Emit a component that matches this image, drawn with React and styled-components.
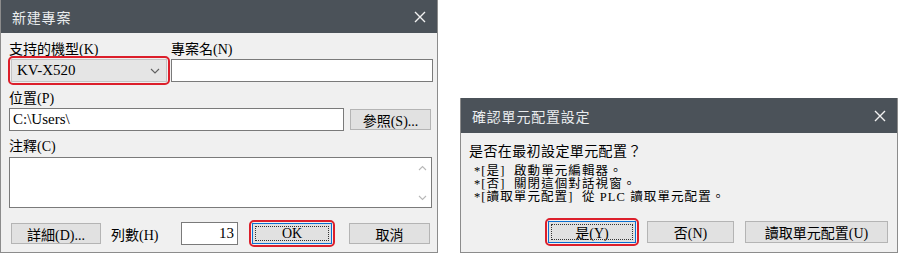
import styled, { createGlobalStyle } from "styled-components";

const GlobalStyle = createGlobalStyle`
  html, body {
    margin: 0;
    padding: 0;
    background: #ffffff;
  }
  body {
    font-family: "Liberation Serif", "Noto Sans CJK TC", serif;
    color: #000;
  }
`;

const Page = styled.div`
  width: 900px;
  height: 254px;
  display: flex;
  align-items: flex-end;
  gap: 22px;
  box-sizing: border-box;
  padding-bottom: 1px;
`;

const Dialog = styled.div`
  width: ${(p) => p.$width}px;
  height: ${(p) => p.$height}px;
  box-sizing: border-box;
  border: 1px solid #8c8c8c;
  border-top: none;
  background: #f0f0f0;
  display: flex;
  flex-direction: column;
`;

const TitleBar = styled.div`
  height: ${(p) => p.$height}px;
  flex: none;
  background: #4b5259;
  color: #e9ecee;
  display: flex;
  align-items: center;
  justify-content: space-between;
  padding: 0 11px 0 11px;
  font-family: "Noto Sans CJK TC", sans-serif;
  font-size: 14px;
  letter-spacing: 0.8px;
`;

const Body = styled.div`
  flex: 1;
  display: flex;
  flex-direction: column;
  padding: 0 4px 0 8px;
`;

const Label = styled.div`
  font-size: 14px;
  line-height: 16px;
  height: 16px;
  margin-top: ${(p) => p.$top || 0}px;
  white-space: nowrap;
`;

const LabelRow = styled.div`
  display: grid;
  grid-template-columns: 162px 1fr;
  margin-top: 9px;
`;

const FieldRow = styled.div`
  display: flex;
  align-items: center;
  margin-top: ${(p) => p.$top || 0}px;
`;

const Combo = styled.div`
  position: relative;
  width: 156px;
  height: 23px;
  margin-left: 2px;
  margin-right: 4px;
  box-sizing: border-box;
  background: #e5e5e5;
  border: 1px solid #c4c4c4;
  display: flex;
  align-items: center;
  justify-content: space-between;
  padding: 0 6px 0 5px;
  font-size: 15px;
`;

const Marker = styled.span`
  position: absolute;
  inset: -4px;
  border: 2px solid #dc1f2b;
  border-radius: 5px;
  pointer-events: none;
`;

const TextBox = styled.div`
  width: ${(p) => (p.$width ? `${p.$width}px` : "auto")};
  flex: ${(p) => (p.$width ? "none" : "1")};
  height: ${(p) => p.$height || 23}px;
  box-sizing: border-box;
  background: #ffffff;
  border: 1px solid #7a7a7a;
  display: flex;
  align-items: center;
  justify-content: ${(p) => (p.$right ? "flex-end" : "flex-start")};
  padding: 0 3px;
  font-size: 15px;
  margin-right: ${(p) => p.$mr || 0}px;
`;

const Memo = styled.div`
  height: 51px;
  margin-top: 2px;
  margin-right: 1px;
  box-sizing: border-box;
  background: #ffffff;
  border: 1px solid #7a7a7a;
  display: flex;
  justify-content: flex-end;
`;

const ScrollTrack = styled.div`
  width: 17px;
  display: flex;
  flex-direction: column;
  justify-content: space-between;
  align-items: center;
  padding: 7px 0 6px;
`;

const Button = styled.button`
  position: relative;
  width: ${(p) => p.$width}px;
  height: ${(p) => p.$height || 21}px;
  flex: none;
  box-sizing: border-box;
  margin: 0;
  padding: 0;
  background: #e1e1e1;
  border: 1px solid ${(p) => (p.$focused ? "#0a6fd0" : "#b4b4b4")};
  font-family: "Liberation Serif", "Noto Sans CJK TC", serif;
  font-size: 14px;
  color: #000;
  display: flex;
  align-items: center;
  justify-content: center;
  white-space: nowrap;
  ${(p) =>
    p.$focused &&
    `
    &::before {
      content: "";
      position: absolute;
      inset: 2px;
      border: 1px dotted #333;
    }
  `}
`;

const BottomRow = styled.div`
  display: flex;
  align-items: center;
  margin-top: 14px;
  padding-left: 2px;
`;

const InlineLabel = styled.span`
  font-size: 14px;
  width: 80px;
  padding-left: 10px;
  box-sizing: border-box;
  white-space: nowrap;
`;

const Spacer = styled.span`
  width: ${(p) => p.$width}px;
  flex: none;
`;

const Question = styled.div`
  font-family: "Noto Sans CJK TC", sans-serif;
  font-size: 14px;
  line-height: 16px;
  margin-top: 9px;
  letter-spacing: 0.4px;
`;

const Notes = styled.div`
  margin-top: 6px;
  padding-left: 5px;
  font-family: "Liberation Serif", "Noto Sans CJK TC", serif;
  font-size: 12.5px;
  line-height: 14px;
  letter-spacing: 1.1px;
`;

const Note = styled.div`
  white-space: pre;
  height: 13px;
`;

const ButtonBar = styled.div`
  display: flex;
  justify-content: flex-end;
  gap: ${(p) => p.$gap || 11}px;
  margin-top: 18px;
  padding-right: 5px;
`;

function CloseIcon() {
  return (
    <svg width="12" height="12" viewBox="0 0 12 12">
      <path d="M1 1 L11 11 M11 1 L1 11" stroke="#f2f2f2" strokeWidth="1.4" fill="none" />
    </svg>
  );
}

function Chevron({ up }) {
  return (
    <svg width="9" height="6" viewBox="0 0 9 6">
      <path
        d={up ? "M1 5 L4.5 1.5 L8 5" : "M1 1 L4.5 4.5 L8 1"}
        stroke="#b8b8b8"
        strokeWidth="1.1"
        fill="none"
      />
    </svg>
  );
}

function NewProjectDialog() {
  return (
    <Dialog $width={438} $height={253}>
      <TitleBar $height={33}>
        <span>新建專案</span>
        <CloseIcon />
      </TitleBar>
      <Body>
        <LabelRow>
          <Label>支持的機型(K)</Label>
          <Label>專案名(N)</Label>
        </LabelRow>
        <FieldRow $top={1}>
          <Combo>
            <span>KV-X520</span>
            <svg width="10" height="6" viewBox="0 0 10 6">
              <path d="M1 1 L5 5 L9 1" stroke="#606060" strokeWidth="1.1" fill="none" />
            </svg>
            <Marker />
          </Combo>
          <TextBox />
        </FieldRow>
        <Label $top={9}>位置(P)</Label>
        <FieldRow $top={1}>
          <TextBox $width={335} $mr={6}>C:\Users\</TextBox>
          <Button $width={81}>參照(S)...</Button>
        </FieldRow>
        <Label $top={8}>注釋(C)</Label>
        <Memo>
          <ScrollTrack>
            <Chevron up />
            <Chevron />
          </ScrollTrack>
        </Memo>
        <BottomRow>
          <Button $width={90}>詳細(D)...</Button>
          <InlineLabel>列數(H)</InlineLabel>
          <TextBox $width={57} $right $mr={14}>
            13
          </TextBox>
          <Button $width={80} $focused>
            OK
            <Marker />
          </Button>
          <Spacer $width={17} />
          <Button $width={81}>取消</Button>
        </BottomRow>
      </Body>
    </Dialog>
  );
}

function UnitConfigDialog() {
  return (
    <Dialog $width={438} $height={155}>
      <TitleBar $height={35}>
        <span>確認單元配置設定</span>
        <CloseIcon />
      </TitleBar>
      <Body>
        <Question>是否在最初設定單元配置？</Question>
        <Notes>
          <Note>*[是]  啟動單元編輯器。</Note>
          <Note>*[否]  關閉這個對話視窗。</Note>
          <Note>*[讀取單元配置]  從 PLC 讀取單元配置。</Note>
        </Notes>
        <ButtonBar>
          <Button $width={88} $height={22} $focused>
            是(Y)
            <Marker />
          </Button>
          <Button $width={87} $height={22}>
            否(N)
          </Button>
          <Button $width={143} $height={22}>
            讀取單元配置(U)
          </Button>
        </ButtonBar>
      </Body>
    </Dialog>
  );
}

export default function App() {
  return (
    <>
      <GlobalStyle />
      <Page>
        <NewProjectDialog />
        <UnitConfigDialog />
      </Page>
    </>
  );
}
